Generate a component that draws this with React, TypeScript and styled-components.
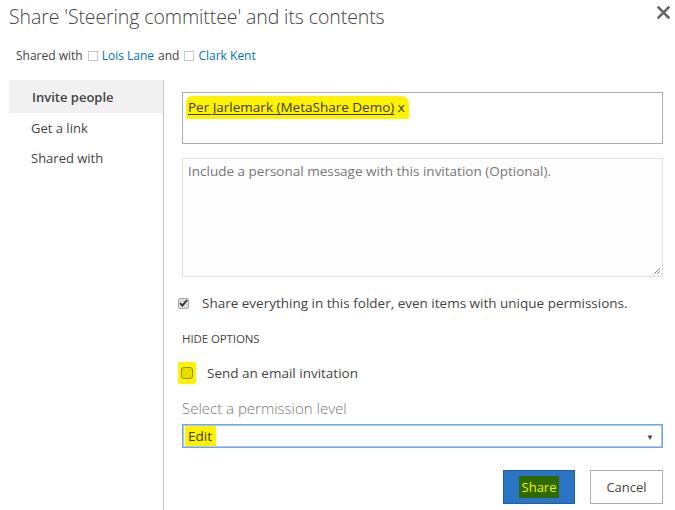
import React from "react";
import styled, { createGlobalStyle } from "styled-components";

const Global = createGlobalStyle`
  html, body { margin: 0; padding: 0; background: #fff; }
  body { font-family: "Open Sans", "Noto Sans", "Liberation Sans", sans-serif; color: #444; }
  * { box-sizing: border-box; }
`;

const Dialog = styled.div`
  width: 675px;
  height: 510px;
  overflow: hidden;
  background: #fff;
`;

const Header = styled.div`
  display: flex;
  justify-content: space-between;
  align-items: flex-start;
  padding: 3px 4px 0 9px;
`;

const Title = styled.h1`
  margin: 0;
  font-size: 19.5px;
  font-weight: 300;
  color: #444;
  line-height: 28px;
  letter-spacing: -0.1px;
`;

const CloseBtn = styled.button`
  border: 0;
  background: none;
  padding: 0;
  margin: 1px 0 0 0;
  width: 16px;
  height: 16px;
  display: flex;
  align-items: center;
  justify-content: center;
  cursor: pointer;
`;

const SharedRow = styled.div`
  display: flex;
  align-items: center;
  gap: 4px;
  padding-left: 16px;
  margin-top: 17px;
  font-size: 12px;
  line-height: 16px;
  color: #444;
`;

const Placeholder = styled.span`
  display: inline-block;
  width: 10px;
  height: 10px;
  border: 1px solid #c8c8c8;
  margin-left: 1px;
`;

const PersonLink = styled.a`
  color: #0072c6;
  text-decoration: none;
`;

const Body = styled.div`
  display: flex;
  margin-top: 16px;
  height: 430px;
`;

const Nav = styled.nav`
  width: 164px;
  padding-left: 9px;
  border-right: 1px solid #c6c6c6;
  display: flex;
  flex-direction: column;
`;

const NavItem = styled.div<{ $active?: boolean }>`
  height: ${(p) => (p.$active ? 33 : 30)}px;
  display: flex;
  align-items: center;
  padding-left: ${(p) => (p.$active ? 23 : 22)}px;
  background: ${(p) => (p.$active ? "#f1f1f1" : "transparent")};
  font-size: 13px;
  font-weight: ${(p) => (p.$active ? 600 : 400)};
  color: #444;
`;

const Content = styled.div`
  flex: 1;
  padding: 12px 12px 0 18px;
  display: flex;
  flex-direction: column;
`;

const Picker = styled.div`
  height: 52px;
  border: 1px solid #ababab;
  padding: 2px 3px;
`;

const Highlight = styled.span`
  display: inline-block;
  background: #fff200;
  padding: 3px 4px 3px 2px;
  border-radius: 6px 8px 2px 2px;
  font-size: 13.5px;
  line-height: 17px;
  color: #3a3a00;
`;

const Underlined = styled.span`
  text-decoration: underline;
  text-underline-offset: 2px;
`;

const Message = styled.div`
  margin-top: 14px;
  height: 119px;
  border: 1px solid #e1e1e1;
  background: #fdfdfd;
  padding: 4px 5px;
  font-size: 13.5px;
  line-height: 17px;
  color: #777;
  position: relative;
`;

const Grip = styled.svg`
  position: absolute;
  right: 1px;
  bottom: 1px;
`;

const CheckRow = styled.label<{ $gap: number; $top: number }>`
  display: flex;
  align-items: center;
  gap: ${(p) => p.$gap}px;
  margin-top: ${(p) => p.$top}px;
  font-size: 13.5px;
  color: #444;
  margin-left: -4px;
`;

const CheckedBox = styled.span`
  width: 11px;
  height: 11px;
  border: 1px solid #aaa;
  border-radius: 2px;
  background: #dcdcdc;
  display: flex;
  align-items: center;
  justify-content: center;
`;

const YellowBox = styled.span`
  width: 18px;
  height: 22px;
  background: #fff200;
  border-radius: 2px;
  display: flex;
  align-items: center;
  justify-content: center;
`;

const EmptyBox = styled.span`
  width: 12px;
  height: 12px;
  border: 1px solid #8c8a20;
  border-radius: 3px;
  background: #e3df00;
`;

const OptionsLink = styled.div`
  font-size: 11.5px;
  color: #444;
  margin-top: 19px;
  letter-spacing: -0.1px;
`;

const Label = styled.div`
  margin-top: 14px;
  font-size: 15px;
  font-weight: 300;
  color: #777;
  line-height: 20px;
`;

const Select = styled.div`
  margin-top: 6px;
  height: 24px;
  border: 1px solid #6ea4f0;
  box-shadow: inset 0 0 0 1px #a9c9f5;
  display: flex;
  align-items: center;
  justify-content: space-between;
  padding: 0 8px 0 2px;
`;

const SelectValue = styled.span`
  background: #fff200;
  font-size: 13.5px;
  line-height: 20px;
  padding: 0 4px 0 3px;
  color: #3a3a00;
`;

const Arrow = styled.span`
  font-size: 8px;
  color: #444;
`;

const Buttons = styled.div`
  display: flex;
  justify-content: flex-end;
  gap: 15px;
  margin-top: 22px;
`;

const Button = styled.button<{ $primary?: boolean }>`
  width: ${(p) => (p.$primary ? 72 : 73)}px;
  height: 34px;
  font-family: inherit;
  font-size: 13px;
  border: 1px solid ${(p) => (p.$primary ? "#1e5fa8" : "#ababab")};
  background: ${(p) => (p.$primary ? "#2a74c5" : "#fff")};
  color: #444;
  display: flex;
  align-items: center;
  justify-content: center;
  padding: 0;
`;

const GreenMark = styled.span`
  background: #2f6a00;
  color: #f2f200;
  padding: 3px;
  line-height: 16px;
`;

export default function App() {
  return (
    <Dialog>
      <Global />
      <Header>
        <Title>Share 'Steering committee' and its contents</Title>
        <CloseBtn aria-label="Close">
          <svg width="13" height="13" viewBox="0 0 13 13">
            <path d="M1.5 1.5 L11.5 11.5 M11.5 1.5 L1.5 11.5" stroke="#666" strokeWidth="2.6" strokeLinecap="square" />
          </svg>
        </CloseBtn>
      </Header>
      <SharedRow>
        <span>Shared with</span>
        <Placeholder />
        <PersonLink>Lois Lane</PersonLink>
        <span>and</span>
        <Placeholder />
        <PersonLink>Clark Kent</PersonLink>
      </SharedRow>
      <Body>
        <Nav>
          <NavItem $active>Invite people</NavItem>
          <NavItem>Get a link</NavItem>
          <NavItem>Shared with</NavItem>
        </Nav>
        <Content>
          <Picker>
            <Highlight>
              <Underlined>Per Jarlemark (MetaShare Demo)</Underlined> x
            </Highlight>
          </Picker>
          <Message>
            Include a personal message with this invitation (Optional).
            <Grip width="9" height="9" viewBox="0 0 9 9">
              <path d="M8 2 L2 8 M8 5 L5 8" stroke="#888" strokeWidth="1" />
            </Grip>
          </Message>
          <CheckRow $gap={13} $top={17}>
            <CheckedBox>
              <svg width="9" height="8" viewBox="0 0 9 8">
                <path d="M1 4.2 L3.4 6.6 L8 1.2" stroke="#333" strokeWidth="1.8" fill="none" />
              </svg>
            </CheckedBox>
            Share everything in this folder, even items with unique permissions.
          </CheckRow>
          <OptionsLink>HIDE OPTIONS</OptionsLink>
          <CheckRow $gap={11} $top={16}>
            <YellowBox>
              <EmptyBox />
            </YellowBox>
            Send an email invitation
          </CheckRow>
          <Label>Select a permission level</Label>
          <Select>
            <SelectValue>Edit</SelectValue>
            <Arrow>▼</Arrow>
          </Select>
          <Buttons>
            <Button $primary>
              <GreenMark>Share</GreenMark>
            </Button>
            <Button>Cancel</Button>
          </Buttons>
        </Content>
      </Body>
    </Dialog>
  );
}
